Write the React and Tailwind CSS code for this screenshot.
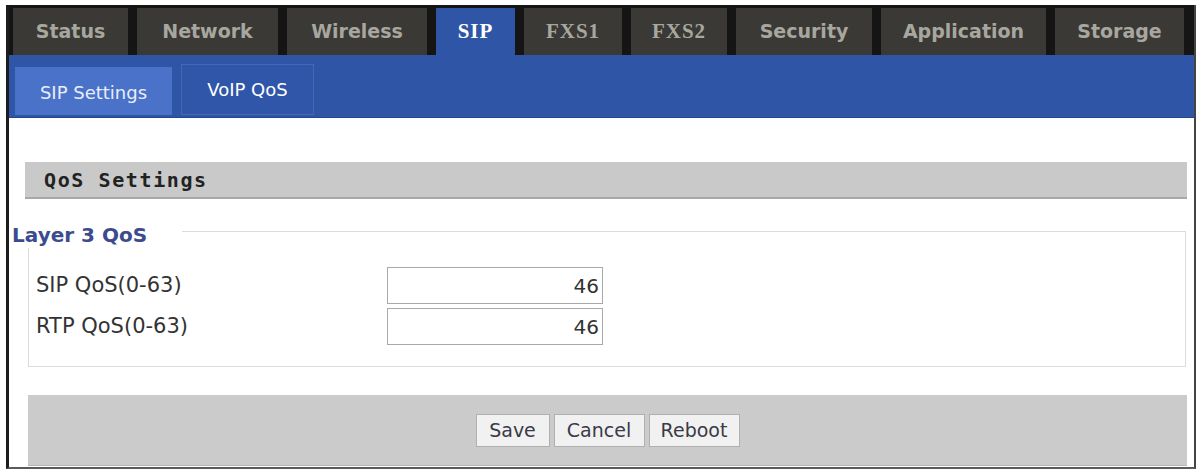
import React, { useState } from 'react';

const tabs = [
  { name: 'Status', w: 'w-[115px]' },
  { name: 'Network', w: 'w-[141px]' },
  { name: 'Wireless', w: 'w-[140px]' },
  { name: 'SIP', w: 'w-[79px]', serif: true, active: true },
  { name: 'FXS1', w: 'w-[98px]', serif: true },
  { name: 'FXS2', w: 'w-[96px]', serif: true },
  { name: 'Security', w: 'w-[136px]' },
  { name: 'Application', w: 'w-[165px]' },
  { name: 'Storage', w: 'w-[129px]' },
];

const sans = "font-['DejaVu_Sans',Verdana,sans-serif]";

function QosRow({ label, value, onChange }) {
  return (
    <div className="flex items-center">
      <span className={`w-[351px] text-[21px] text-[#333] ${sans}`}>{label}</span>
      <input
        type="text"
        value={value}
        onChange={onChange}
        className={`w-[216px] h-[37px] border border-[#a9a9a9] bg-white text-right pr-[3px] text-[20px] text-[#333] outline-none ${sans}`}
      />
    </div>
  );
}

export default function App() {
  const [sipQos, setSipQos] = useState('46');
  const [rtpQos, setRtpQos] = useState('46');

  return (
    <div className="w-[1201px] h-[473px] bg-white pt-[5px] pl-[6px]">
      <div className="w-[1190px] h-[464px] flex flex-col border-l-[3px] border-l-[#1c1c1c] border-r-2 border-r-[#444] border-b-2 border-b-[#5a5a5a]">
        {/* main tabs */}
        <div className="h-[50px] bg-[#151515] flex items-end pl-[4px] gap-[9px]">
          {tabs.map((t) => (
            <div
              key={t.name}
              className={`${t.w} h-[47px] flex items-center justify-center font-bold ${
                t.active ? 'bg-[#2e55a6] text-white' : 'bg-[#3a3935] text-[#a8a79f]'
              } ${
                t.serif
                  ? "font-['Liberation_Serif',serif] text-[21px] tracking-[1px]"
                  : `${sans} text-[19px]`
              }`}
            >
              {t.name}
            </div>
          ))}
        </div>

        {/* sub tabs */}
        <div className="h-[63px] bg-[#2e55a6] border-b border-b-[#24468c] flex items-end pl-[6px] gap-[9px] pb-[2px]">
          <div className={`w-[157px] h-[48px] bg-[#4a72c9] flex items-center justify-center pt-[3px] text-[18px] text-[#e8eef9] ${sans}`}>
            SIP Settings
          </div>
          <div className={`w-[133px] h-[51px] bg-[#2f56a8] border border-[#4368b9] flex items-center justify-center text-[18px] text-white ${sans}`}>
            VoIP QoS
          </div>
        </div>

        {/* content */}
        <div className="flex-1 bg-white pt-[44px] flex flex-col">
          <div className="ml-[16px] mr-[7px] h-[37px] bg-[#c9c9c9] border-b-2 border-b-[#a8a8a8] flex items-center pl-[19px]">
            <span className="font-['DejaVu_Sans_Mono',monospace] font-bold text-[20px] tracking-[1.6px] text-[#222]">
              QoS Settings
            </span>
          </div>

          <div className="relative mt-[32px] ml-[19px] mr-[8px] h-[136px] border border-[#dcdcdc] pt-[35px] pl-[7px] flex flex-col gap-[4px]">
            <div className={`absolute left-[-17px] top-[-10px] bg-white pr-[35px] text-[20px] font-bold text-[#3c4b8d] leading-[26px] ${sans}`}>
              Layer 3 QoS
            </div>
            <QosRow label="SIP QoS(0-63)" value={sipQos} onChange={(e) => setSipQos(e.target.value)} />
            <QosRow label="RTP QoS(0-63)" value={rtpQos} onChange={(e) => setRtpQos(e.target.value)} />
          </div>

          <div className="mt-[28px] ml-[19px] mr-[7px] h-[71px] bg-[#cbcbcb] border-b border-b-[#b5b5b5] flex items-center justify-center gap-[4px]">
            {[
              ['Save', 'w-[74px]'],
              ['Cancel', 'w-[91px]'],
              ['Reboot', 'w-[91px]'],
            ].map(([label, w]) => (
              <button
                key={label}
                type="button"
                className={`${w} h-[33px] bg-[#f1f1f1] border border-[#b0b0b0] text-[19px] text-[#3a3a48] ${sans}`}
              >
                {label}
              </button>
            ))}
          </div>
        </div>
      </div>
    </div>
  );
}
